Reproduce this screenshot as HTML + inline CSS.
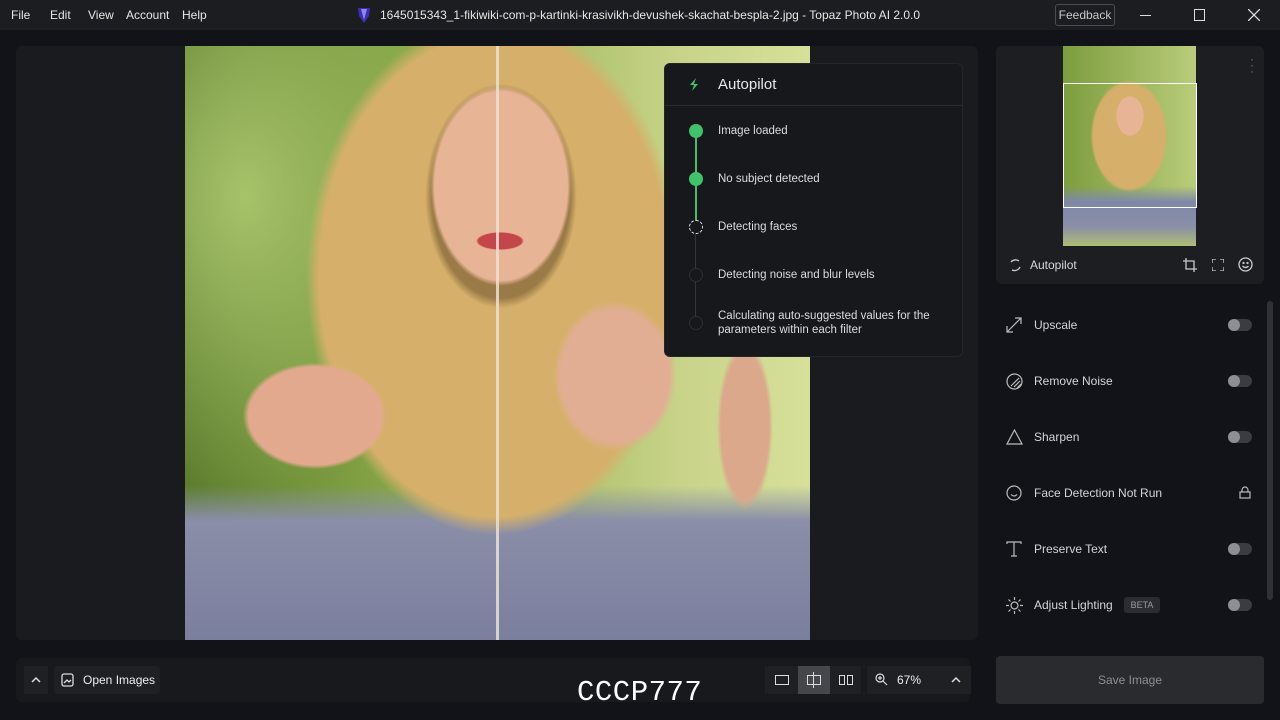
<!DOCTYPE html>
<html><head><meta charset="utf-8"><style>
*{box-sizing:border-box;margin:0;padding:0}
body{width:1280px;height:720px;background:#111318;font-family:"Liberation Sans",sans-serif;color:#d8d9dc;position:relative;overflow:hidden;font-size:12px}
.abs{position:absolute}
.tb{left:0;top:0;width:1280px;height:30px;background:#1c1d21}
.menu span{position:absolute;top:8px;font-size:12px;color:#e6e6e6}
.photo{left:185px;top:46px;width:625px;height:594px;overflow:hidden;
background:
radial-gradient(ellipse 24px 9px at 315px 195px,#c4464a 90%,transparent),
radial-gradient(ellipse 95px 135px at 316px 140px,#e8b496 70%,transparent 74%),
radial-gradient(ellipse 115px 170px at 316px 150px,#9a7a46 60%,transparent 66%),
radial-gradient(ellipse 95px 70px at 130px 370px,#e3a98e 70%,transparent 76%),
radial-gradient(ellipse 90px 110px at 430px 330px,#e2ae93 60%,transparent 68%),
radial-gradient(ellipse 40px 120px at 560px 380px,#dba88c 60%,transparent 70%),
radial-gradient(ellipse 270px 370px at 310px 230px,#d6b06a 65%,transparent 70%),
linear-gradient(180deg,transparent 74%,#8a8ea8 80%,#7a7f9e 100%),
radial-gradient(ellipse 200px 300px at 60px 150px,#a6c36a,transparent),
linear-gradient(90deg,#5d7d2e,#8fae4c 40%,#c9d48a 80%,#d6e09a)}
.panel{background:#1c1e22;border-radius:6px}
.ap{left:664px;top:63px;width:299px;height:294px;background:#16181c;border-radius:6px;border:1px solid #23252a}
.step{position:absolute;left:53px;font-size:11.5px;color:#dcdcdc;line-height:14px}
.dot{position:absolute;left:24px;width:14px;height:14px;border-radius:50%}
.filt{position:absolute;left:1034px;font-size:12px;color:#d4d5d8}
.tog{position:absolute;left:1228px;width:24px;height:12px;border-radius:6px;background:#3a3c41}
.tog:before{content:"";position:absolute;left:0;top:0;width:12px;height:12px;border-radius:50%;background:#8d8f93}
.ic{position:absolute;left:1006px}
</style></head><body>
<div class="abs tb"></div>
<div class="menu"><span style="left:11px">File</span><span style="left:50px">Edit</span><span style="left:88px">View</span><span style="left:126px">Account</span><span style="left:182px">Help</span></div>
<svg class="abs" style="left:356px;top:6px" width="16" height="18"><path d="M2 2h12l-1 8-5 7-5-7z" fill="#3b2fb0"/><path d="M5 3h6l-3 11z" fill="#8f86f5"/></svg>
<div class="abs" style="left:380px;top:8px;font-size:12px;color:#e6e6e6">1645015343_1-fikiwiki-com-p-kartinki-krasivikh-devushek-skachat-bespla-2.jpg - Topaz Photo AI 2.0.0</div>
<div class="abs" style="left:1055px;top:4px;width:60px;height:22px;border:1px solid #4a4c51;border-radius:3px;font-size:12px;color:#c9c9c9;text-align:center;line-height:20px">Feedback</div>
<div class="abs" style="left:1140px;top:15px;width:11px;height:1px;background:#ddd"></div>
<div class="abs" style="left:1194px;top:9px;width:11px;height:12px;border:1px solid #ddd"></div>
<svg class="abs" style="left:1248px;top:9px" width="12" height="12"><path d="M0 0L12 12M12 0L0 12" stroke="#ddd" stroke-width="1.3"/></svg>

<div class="abs panel" style="left:16px;top:46px;width:962px;height:594px;background:#191b1f"></div>
<div class="abs photo"></div>
<div class="abs" style="left:496px;top:46px;width:3px;height:594px;background:#e9e1d3;opacity:.85"></div>

<div class="abs ap">
<svg style="position:absolute;left:22px;top:13px" width="14" height="14"><path d="M9 1L3 8h4l-2 6 6-7H7z" fill="#3fc26b"/></svg>
<div style="position:absolute;left:53px;top:12px;font-size:15px;color:#e8e8e8">Autopilot</div>
<div style="position:absolute;left:0;top:41px;width:297px;height:1px;background:#2a2c31"></div>
<div style="position:absolute;left:30px;top:70px;width:2px;height:96px;background:#3fc26b"></div>
<div style="position:absolute;left:30px;top:166px;width:1px;height:96px;background:#33353a"></div>
<div class="dot" style="top:60px;background:#3fc26b"></div>
<div class="dot" style="top:108px;background:#3fc26b"></div>
<div class="dot" style="top:156px;border:1.5px dashed #ddd;background:#16181c"></div>
<div class="dot" style="top:204px;border:1.5px solid #2c2e33;background:#16181c"></div>
<div class="dot" style="top:252px;border:1.5px solid #2c2e33;background:#16181c"></div>
<div class="step" style="top:60px">Image loaded</div>
<div class="step" style="top:108px">No subject detected</div>
<div class="step" style="top:156px">Detecting faces</div>
<div class="step" style="top:204px">Detecting noise and blur levels</div>
<div class="step" style="top:245px">Calculating auto-suggested values for the<br>parameters within each filter</div>
</div>

<div class="abs panel" style="left:996px;top:46px;width:268px;height:238px"></div>
<div class="abs" style="left:1063px;top:46px;width:133px;height:200px;background:
radial-gradient(ellipse 19px 27px at 67px 70px,#e8b496 70%,transparent 74%),
radial-gradient(ellipse 55px 80px at 66px 90px,#d6b06a 65%,transparent 70%),
linear-gradient(180deg,transparent 70%,#7e88a8 78%,#8a8ea8 90%,#aebd74),
linear-gradient(90deg,#7d9d3e,#b9cc7a)"></div>
<div class="abs" style="left:1063px;top:83px;width:134px;height:125px;border:1px solid #fff"></div>
<div class="abs" style="left:1250px;top:56px;color:#777;font-size:12px;line-height:6px">·<br>·<br>·</div>
<svg class="abs" style="left:1008px;top:258px" width="14" height="14"><path d="M3 4A6 6 0 0 1 11 3M12 9A6 6 0 0 1 4 12" stroke="#ccc" fill="none" stroke-width="1.3"/></svg>
<div class="abs" style="left:1030px;top:258px;font-size:12px">Autopilot</div>
<svg class="abs" style="left:1183px;top:258px;" width="14" height="14" stroke="#ccc" fill="none" stroke-width="1.3"><path d="M3 0v11h11M0 3h11v11"/></svg>
<svg class="abs" style="left:1212px;top:259px;" width="12" height="12" stroke="#ccc" fill="none" stroke-width="1.3"><path d="M0 4V0h4M8 0h4v4M12 8v4H8M4 12H0V8"/></svg>
<svg class="abs" style="left:1238px;top:257px;" width="15" height="15" stroke="#ccc" fill="none" stroke-width="1.3"><circle cx="7.5" cy="7.5" r="6.5"/><path d="M4.5 9q3 3 6 0"/><circle cx="5.5" cy="6" r=".5"/><circle cx="9.5" cy="6" r=".5"/></svg>

<div class="abs" style="left:1267px;top:301px;width:6px;height:299px;border-radius:3px;background:#2f3135"></div>

<svg class="ic" style="top:317px" width="16" height="16" stroke="#bbb" fill="none" stroke-width="1.2"><path d="M1 15L15 1M9 1h6v6M1 9v6h6"/></svg>
<div class="filt" style="top:318px">Upscale</div><div class="tog" style="top:319px"></div>
<svg class="ic" style="top:373px" width="17" height="17" stroke="#bbb" fill="none" stroke-width="1.2"><circle cx="8.5" cy="8.5" r="7.5"/><path d="M5 13L13 5M8 14l6-6M11 15l4-4"/></svg>
<div class="filt" style="top:374px">Remove Noise</div><div class="tog" style="top:375px"></div>
<svg class="ic" style="top:429px" width="17" height="16" stroke="#bbb" fill="none" stroke-width="1.2"><path d="M8.5 1L16 15H1z"/></svg>
<div class="filt" style="top:430px">Sharpen</div><div class="tog" style="top:431px"></div>
<svg class="ic" style="top:485px" width="16" height="16" stroke="#bbb" fill="none" stroke-width="1.2"><circle cx="8" cy="8" r="7"/><path d="M5 9.5q3 3 6 0"/></svg>
<div class="filt" style="top:486px">Face Detection Not Run</div>
<svg class="abs" style="left:1239px;top:486px" width="12" height="13" stroke="#bbb" fill="none" stroke-width="1.2"><rect x="1" y="6" width="10" height="6"/><path d="M3 6V4a3 3 0 0 1 6 0v2"/></svg>
<svg class="ic" style="top:541px" width="16" height="16" stroke="#bbb" fill="none" stroke-width="1.2"><path d="M1 3V1h14v2M8 1v14M5 15h6"/></svg>
<div class="filt" style="top:542px">Preserve Text</div><div class="tog" style="top:543px"></div>
<svg class="ic" style="top:597px" width="17" height="17" stroke="#bbb" fill="none" stroke-width="1.2"><circle cx="8.5" cy="8.5" r="3.5"/><path d="M8.5 0v3M8.5 14v3M0 8.5h3M14 8.5h3M2.5 2.5l2 2M12.5 12.5l2 2M2.5 14.5l2-2M12.5 4.5l2-2"/></svg>
<div class="filt" style="top:598px">Adjust Lighting</div>
<div class="abs" style="left:1124px;top:597px;width:36px;height:16px;background:#2a2c31;border-radius:3px;font-size:9px;color:#9a9ca0;text-align:center;line-height:16px">BETA</div>
<div class="tog" style="top:599px"></div>

<div class="abs panel" style="left:16px;top:658px;width:954px;height:44px;background:#17191d"></div>
<div class="abs" style="left:24px;top:666px;width:24px;height:28px;background:#1e2024"></div>
<svg class="abs" style="left:31px;top:676px" width="10" height="7" stroke="#ddd" fill="none" stroke-width="1.5"><path d="M1 6l4-4 4 4"/></svg>
<div class="abs" style="left:54px;top:666px;width:106px;height:28px;background:#1e2024;border-radius:3px"></div>
<svg class="abs" style="left:61px;top:673px" width="13" height="14" stroke="#ddd" fill="none" stroke-width="1.3"><rect x="1" y="1" width="11" height="12" rx="2"/><path d="M3 10l3-3 2 2 2-2"/></svg>
<div class="abs" style="left:83px;top:673px;font-size:12px;color:#eee">Open Images</div>
<div class="abs" style="left:577px;top:680px;font-family:'Liberation Mono',monospace;font-size:29px;color:#fff;letter-spacing:0.5px;line-height:26px;white-space:nowrap">CCCP777</div>
<div class="abs" style="left:765px;top:666px;width:96px;height:28px;background:#1e2024"></div>
<div class="abs" style="left:798px;top:666px;width:32px;height:28px;background:#45474c"></div>
<div class="abs" style="left:775px;top:675px;width:14px;height:10px;border:1.3px solid #ddd"></div>
<div class="abs" style="left:807px;top:675px;width:14px;height:10px;border:1.3px solid #ddd"></div><div class="abs" style="left:813px;top:672px;width:1.3px;height:16px;background:#ddd"></div>
<div class="abs" style="left:839px;top:675px;width:6px;height:10px;border:1.3px solid #ddd"></div><div class="abs" style="left:847px;top:675px;width:6px;height:10px;border:1.3px solid #ddd"></div>
<div class="abs" style="left:867px;top:666px;width:104px;height:28px;background:#1e2024"></div>
<svg class="abs" style="left:875px;top:673px" width="13" height="13" stroke="#ddd" fill="none" stroke-width="1.2"><circle cx="5" cy="5" r="4"/><path d="M8 8l4 4M3 5h4M5 3v4"/></svg>
<div class="abs" style="left:897px;top:673px;font-size:12px;color:#eee">67%</div>
<svg class="abs" style="left:951px;top:676px" width="10" height="7" stroke="#ddd" fill="none" stroke-width="1.5"><path d="M1 6l4-4 4 4"/></svg>
<div class="abs" style="left:996px;top:656px;width:268px;height:48px;background:#2a2b2f;border-radius:4px;font-size:12px;color:#8e8f93;text-align:center;line-height:48px">Save Image</div>
</body></html>
